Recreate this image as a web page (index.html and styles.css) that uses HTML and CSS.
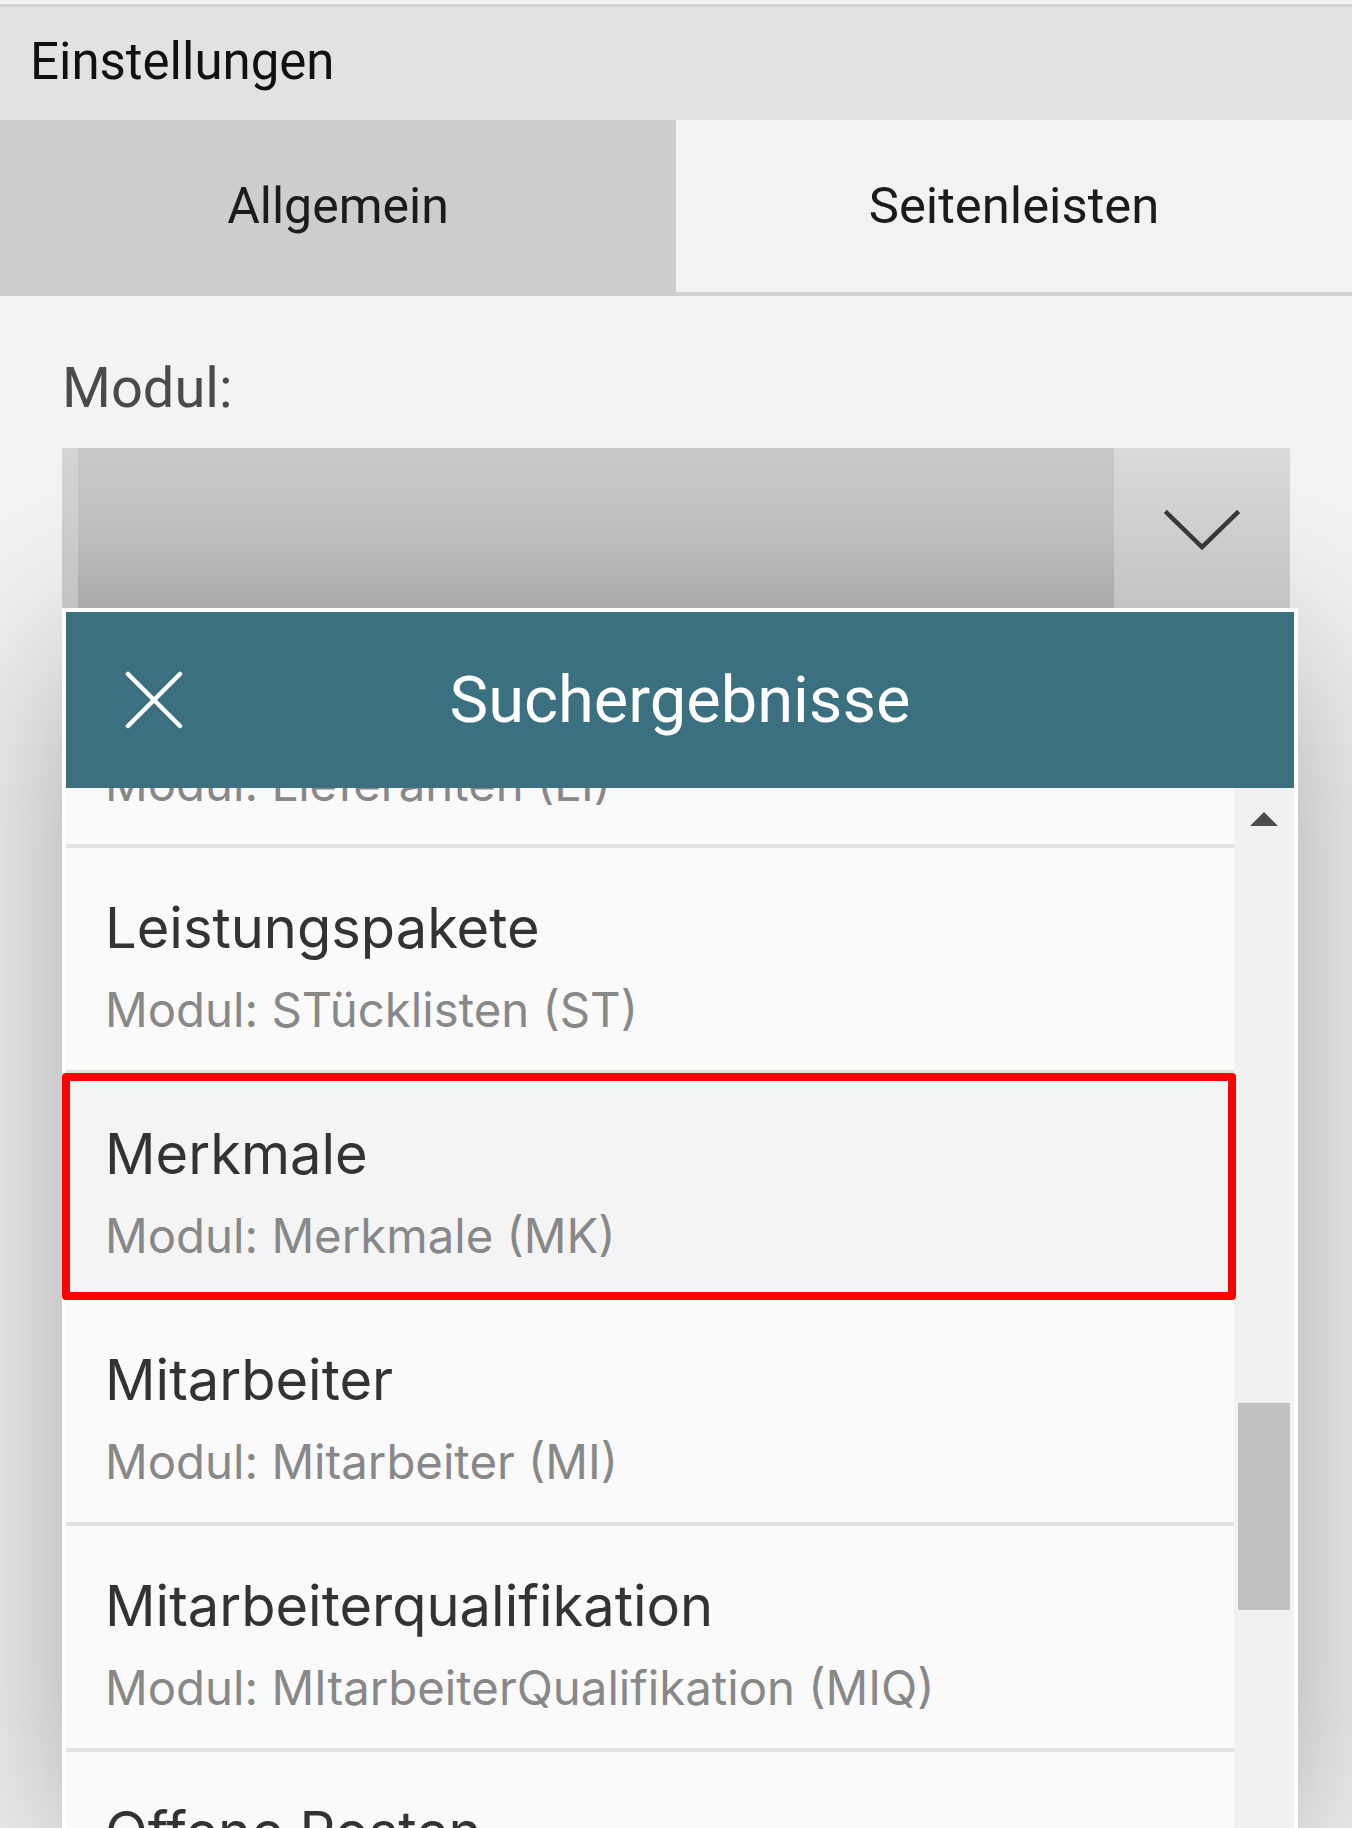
FILE: index.html
```html
<!DOCTYPE html>
<html lang="de">
<head>
<meta charset="utf-8">
<title>Einstellungen</title>
<link rel="stylesheet" href="styles.css">
</head>
<body>
<div class="page">
  <header class="topbar">
    <h1 class="topbar-title">Einstellungen</h1>
  </header>
  <nav class="tabs">
    <div class="tab tab-active">Allgemein</div>
    <div class="tab">Seitenleisten</div>
  </nav>
  <main class="content">
    <div class="field-label">Modul:</div>
    <div class="select">
      <div class="select-edge"></div>
      <div class="select-value"></div>
      <div class="select-button">
        <svg class="chevron" width="76" height="42" viewBox="0 0 76 42" aria-hidden="true">
          <polyline points="3,3 38,37 73,3" fill="none" stroke="#383838" stroke-width="4.5" stroke-linecap="square" stroke-linejoin="miter"/>
        </svg>
      </div>
    </div>
    <section class="popup">
      <div class="popup-head">
        <button class="popup-close" aria-label="Schließen">
          <svg width="58" height="58" viewBox="0 0 58 58" aria-hidden="true">
            <line x1="3" y1="3" x2="55" y2="55" stroke="#fff" stroke-width="4.5" stroke-linecap="round"/>
            <line x1="55" y1="3" x2="3" y2="55" stroke="#fff" stroke-width="4.5" stroke-linecap="round"/>
          </svg>
        </button>
        <h2 class="popup-title">Suchergebnisse</h2>
        <span class="popup-spacer"></span>
      </div>
      <div class="popup-body">
        <ul class="results">
          <li class="result result-partial">
            <div class="result-sub">Modul: Lieferanten (LI)</div>
          </li>
          <li class="result">
            <div class="result-title">Leistungspakete</div>
            <div class="result-sub">Modul: STücklisten (ST)</div>
          </li>
          <li class="result result-selected">
            <div class="result-title">Merkmale</div>
            <div class="result-sub">Modul: Merkmale (MK)</div>
          </li>
          <li class="result">
            <div class="result-title">Mitarbeiter</div>
            <div class="result-sub">Modul: Mitarbeiter (MI)</div>
          </li>
          <li class="result">
            <div class="result-title">Mitarbeiterqualifikation</div>
            <div class="result-sub">Modul: MItarbeiterQualifikation (MIQ)</div>
          </li>
          <li class="result">
            <div class="result-title">Offene Posten</div>
          </li>
        </ul>
        <div class="scrollbar">
          <span class="scroll-up"></span>
          <span class="scroll-thumb"></span>
        </div>
      </div>
    </section>
  </main>
</div>
</body>
</html>
```

FILE: styles.css
```css
* {
  box-sizing: border-box;
  margin: 0;
  padding: 0;
}

html,
body {
  height: 1828px;
  overflow: hidden;
}

body {
  background: #f3f3f3;
  font-family: Roboto, "Noto Sans", sans-serif;
  font-weight: 400;
}

.page {
  height: 1828px;
  overflow: hidden;
  padding-top: 4px;
  display: flex;
  flex-direction: column;
}

/* Top bar */
.topbar {
  height: 116px;
  flex: none;
  border-top: 3px solid #d2d2d2;
  background: #e2e2e2;
  padding: 0 0 4px 30px;
  display: flex;
  align-items: center;
}

.topbar-title {
  font-size: 51px;
  line-height: 60px;
  font-weight: 400;
  color: #111;
}

/* Tabs */
.tabs {
  flex: none;
  display: grid;
  grid-template-columns: 676px 1fr;
  height: 176px;
}

.tab {
  font-size: 50px;
  line-height: 60px;
  padding-top: 56px;
  text-align: center;
  color: #1b1b1b;
  background: #f2f2f2;
  border-bottom: 4px solid #d0d0d0;
}

.tab-active {
  background: #cdcdcd;
  border-bottom-color: #cdcdcd;
}

.tab + .tab {
  font-size: 50.8px;
}

/* Content */
.content {
  flex: 1;
  min-height: 0;
  padding: 60px 62px 0;
  display: flex;
  flex-direction: column;
}

.field-label {
  font-size: 56px;
  line-height: 64px;
  color: #4a4a4a;
  margin-bottom: 28px;
}

.select {
  position: relative;
  flex: none;
  height: 160px;
  display: flex;
}

.select-edge {
  width: 16px;
  background: linear-gradient(to bottom, #d5d5d5, #c3c3c3);
}

.select-value {
  flex: 1;
  background: linear-gradient(to bottom, #c8c8c8 0%, #c1c1c1 45%, #a9a9a9 100%);
}

.select-button {
  width: 176px;
  display: flex;
  align-items: center;
  justify-content: center;
  background: linear-gradient(to bottom, #dadada, #c3c3c3);
}

.chevron {
  display: block;
  margin-top: 6px;
}

/* Popup */
.popup {
  flex: 1;
  min-height: 0;
  margin-right: -8px;
  border: 4px solid #fff;
  border-bottom: none;
  display: flex;
  flex-direction: column;
  box-shadow: 0 40px 180px rgba(0, 0, 0, 0.32);
}

.popup-head {
  position: relative;
  z-index: 2;
  flex: none;
  height: 176px;
  background: #3a7080;
  display: grid;
  grid-template-columns: 1fr auto 1fr;
  align-items: center;
}

.popup-close {
  justify-self: start;
  margin-left: 59px;
  border: none;
  background: transparent;
  width: 58px;
  height: 58px;
  display: block;
}

.popup-close svg {
  display: block;
}

.popup-title {
  font-size: 65px;
  line-height: 76px;
  font-weight: 400;
  color: #fff;
}

.popup-body {
  flex: 1;
  min-height: 0;
  display: flex;
  background: #fafafa;
}

.results {
  flex: 1;
  list-style: none;
  font-family: Inter, Roboto, sans-serif;
}

.result {
  height: 226px;
  padding: 46px 0 30px 39px;
  border-bottom: 4px solid #e1e1e1;
}

.result-partial {
  height: 94px;
  padding-top: 0;
  margin-top: -34px;
}

.result-selected {
  position: relative;
  background: #f4f4f4;
}

.result-selected::after {
  content: "";
  position: absolute;
  left: -4px;
  right: -2px;
  top: -1px;
  bottom: -4px;
  border: 8px solid #ff0000;
  border-radius: 4px;
}

.result-title {
  font-size: 56px;
  line-height: 68px;
  color: #333;
  white-space: nowrap;
}

.result-sub {
  font-size: 47.3px;
  line-height: 60px;
  color: #888;
  margin-top: 18px;
  white-space: nowrap;
}

.result-partial .result-sub {
  margin-top: 0;
}

/* Scrollbar */
.scrollbar {
  flex: none;
  width: 60px;
  background: #f1f1f1;
  display: flex;
  flex-direction: column;
  align-items: center;
  padding-top: 24px;
}

.scroll-up {
  width: 0;
  height: 0;
  border-left: 14px solid transparent;
  border-right: 14px solid transparent;
  border-bottom: 14px solid #4d4d4d;
}

.scroll-thumb {
  width: 52px;
  height: 207px;
  margin-top: 577px;
  background: #c1c1c1;
}
```
